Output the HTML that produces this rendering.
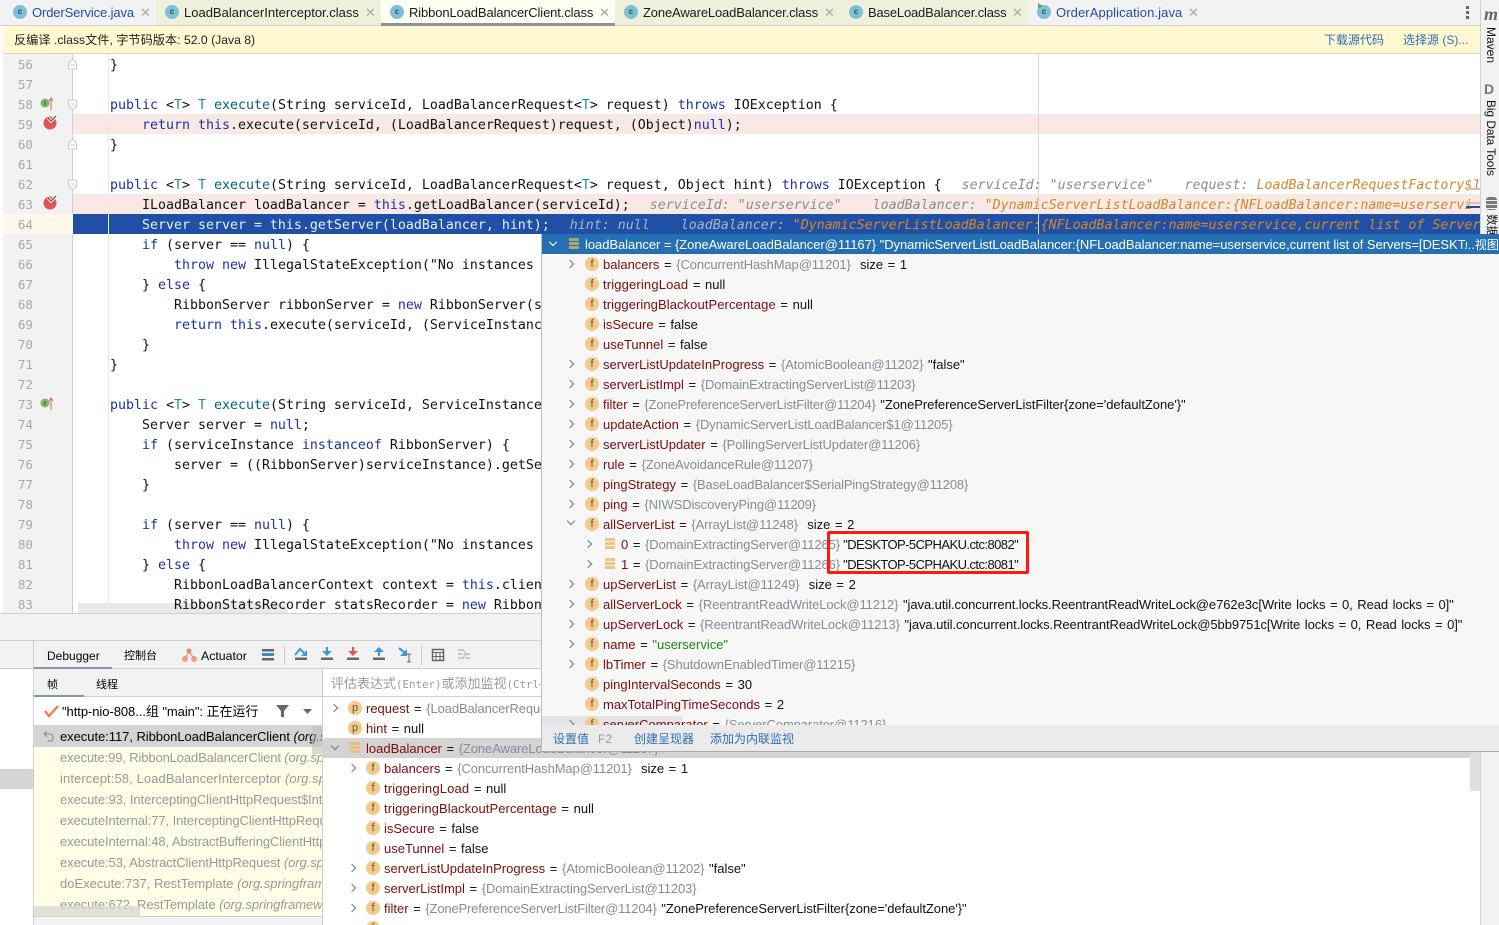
<!DOCTYPE html>
<html><head><meta charset="utf-8">
<style>
html,body{margin:0;padding:0;width:1499px;height:925px;overflow:hidden;background:#fff}
*{box-sizing:border-box}
body{position:relative;font:13px "Liberation Sans","Noto Sans CJK SC",sans-serif;color:#000}
.a{position:absolute}
.t{position:absolute;white-space:nowrap;line-height:20px;height:20px}
.tab{position:absolute;top:0;height:26px;border-bottom:1px solid #d0d0d0}
.tn{position:absolute;top:3px;white-space:nowrap;line-height:20px;color:#1a1a1a;font-size:13px;letter-spacing:-.12px}
.x{position:absolute;top:3px;line-height:20px;color:#aaa;font-size:13px}
.ci{position:absolute;top:5px;width:14px;height:14px;border-radius:50%;background:#7fc0d4;color:#2b4a55;font:bold 8px/14px "Liberation Sans",sans-serif;text-align:center}
.n{position:absolute;left:3px;width:30px;text-align:right;color:#a8a8a8;font:12.6px/22px "DejaVu Sans Mono",monospace;height:20px}
.c{position:absolute;white-space:pre;font:13.29px/24px "DejaVu Sans Mono",monospace;height:20px;color:#111}
.k{color:#1c2fb0}.ty{color:#20909a}.m{color:#00627a}
.h{color:#8c8c8c;font-style:italic}.o{color:#cc8a2b;font-style:italic}
.w{color:#e8eef8}.hs{color:#a7b5cf;font-style:italic}.os{color:#d48a2a;font-style:italic}
.v{position:absolute;white-space:nowrap;line-height:22px;height:20px;font-size:13px;color:#111;word-spacing:1px}
.v b{font-weight:normal;color:#7a0c0c}.v i{font-style:normal;color:#858d93;letter-spacing:-.1px}.v u{text-decoration:none;color:#168a16}
.v s{text-decoration:none;letter-spacing:-.56px;margin-left:-1.5px}
.ic{position:absolute;width:14px;height:14px;border-radius:50%;background:#f4c98a;color:#5a5a3a;font:11px/14px "Liberation Sans",sans-serif;text-align:center}
.ls{position:absolute;width:10px;height:11px;background:repeating-linear-gradient(to bottom,#efc583 0 3px,#f7f7f7 3px 4px)}
.ch{position:absolute;width:6px;height:6px;border-right:1.5px solid #777;border-top:1.5px solid #777;transform:rotate(45deg)}
.cd{position:absolute;width:6px;height:6px;border-right:1.5px solid #777;border-bottom:1.5px solid #777;transform:rotate(45deg)}
.fr{position:absolute;left:60px;white-space:nowrap;line-height:21px;height:21px;font-size:13px;color:#999;letter-spacing:-.08px}
.fr em{color:#999}
</style></head><body>

<!-- tabs -->
<div class="a" style="left:0;top:0;width:1480px;height:26px;background:#f2f2f2;border-bottom:1px solid #d0d0d0"></div>
<div class="tab" style="left:156px;width:225px;background:#eff0dc"></div>
<div class="tab" style="left:381px;width:234px;background:#fffef2;border-bottom:3px solid #8a95a3"></div>
<div class="tab" style="left:615px;width:225px;background:#eff0dc"></div>
<div class="tab" style="left:840px;width:189px;background:#eff0dc"></div>
<div class="ci" style="left:13px">c</div><div class="tn" style="left:32px;color:#1f4fa8">OrderService.java</div><div class="x" style="left:140px">✕</div>
<div class="ci" style="left:165px">c</div><div class="tn" style="left:184px;letter-spacing:0">LoadBalancerInterceptor.class</div><div class="x" style="left:365px">✕</div>
<div class="ci" style="left:390px">c</div><div class="tn" style="left:409px">RibbonLoadBalancerClient.class</div><div class="x" style="left:599px">✕</div>
<div class="ci" style="left:624px">c</div><div class="tn" style="left:643px;letter-spacing:-.15px">ZoneAwareLoadBalancer.class</div><div class="x" style="left:824px">✕</div>
<div class="ci" style="left:849px">c</div><div class="tn" style="left:868px;letter-spacing:-.18px">BaseLoadBalancer.class</div><div class="x" style="left:1012px">✕</div>
<div class="ci" style="left:1037px">c</div><div class="tn" style="left:1056px;color:#1f4fa8;letter-spacing:.1px">OrderApplication.java</div><div class="x" style="left:1188px">✕</div>
<svg class="a" style="left:1036px;top:2px" width="10" height="10"><path d="M2 1l5 3-5 3z" fill="#59a869"/></svg>
<div class="a" style="left:1466px;top:6px;width:3px;height:3px;background:#666;box-shadow:0 5px 0 #666,0 10px 0 #666"></div>

<!-- notification -->
<div class="a" style="left:3px;top:26px;width:1477px;height:28px;background:#fff8d0;border-bottom:1px solid #d6d6d0"></div>
<div class="t" style="left:14px;top:30px;font-size:12.2px;color:#222">反编译 .class文件, 字节码版本: 52.0 (Java 8)</div>
<div class="t" style="left:1324px;top:30px;font-size:12px;color:#2f6fb5">下载源代码</div>
<div class="t" style="left:1403px;top:30px;font-size:12px;color:#2f6fb5">选择源 (S)...</div>

<!-- gutter -->
<div class="a" style="left:3px;top:54px;width:70px;height:559px;background:#f2f2f2;border-right:1px solid #cfcfcf"></div>
<div class="a" style="left:3px;top:214px;width:70px;height:20px;background:#fcf9ea"></div>
<div class="a" style="left:73px;top:114px;width:1407px;height:20px;background:#f8e9e5"></div>
<div class="a" style="left:73px;top:194px;width:1407px;height:20px;background:#f8e9e5"></div>
<div class="a" style="left:73px;top:214px;width:1407px;height:20px;background:#2050a5"></div>
<div class="a" style="left:108px;top:54px;width:1px;height:559px;background:#e8e8e8"></div>
<div class="a" style="left:1038px;top:54px;width:1px;height:180px;background:#d8d8d8"></div>

<div class="n" style="top:54px">56</div><div class="n" style="top:74px">57</div><div class="n" style="top:94px">58</div><div class="n" style="top:114px">59</div><div class="n" style="top:134px">60</div><div class="n" style="top:154px">61</div><div class="n" style="top:174px">62</div><div class="n" style="top:194px">63</div><div class="n" style="top:214px">64</div><div class="n" style="top:234px">65</div><div class="n" style="top:254px">66</div><div class="n" style="top:274px">67</div><div class="n" style="top:294px">68</div><div class="n" style="top:314px">69</div><div class="n" style="top:334px">70</div><div class="n" style="top:354px">71</div><div class="n" style="top:374px">72</div><div class="n" style="top:394px">73</div><div class="n" style="top:414px">74</div><div class="n" style="top:434px">75</div><div class="n" style="top:454px">76</div><div class="n" style="top:474px">77</div><div class="n" style="top:494px">78</div><div class="n" style="top:514px">79</div><div class="n" style="top:534px">80</div><div class="n" style="top:554px">81</div><div class="n" style="top:574px">82</div><div class="n" style="top:594px">83</div>

<svg class="a" style="left:0;top:54px" width="80" height="360">
<g fill="#fff" stroke="#c8c8c8">
<path d="M68.500 15V9l4-4 4 4v6z"/><path d="M70.500 11h4" fill="none"/>
<path d="M68.500 46h8v6l-4 4-4-4z"/><path d="M70.500 50h4" fill="none"/>
<path d="M68.500 95V89l4-4 4 4v6z"/><path d="M70.500 91h4" fill="none"/>
<path d="M68.500 126h8v6l-4 4-4-4z"/><path d="M70.500 130h4" fill="none"/>
</g>
<circle cx="45" cy="49" r="4.500" fill="#7cb868"/><path d="M45 47v4" stroke="#3a5a30"/><path d="M51 56V44M49 47l2-3 2 3" stroke="#e06060" fill="none"/>
<circle cx="50" cy="69" r="6.500" fill="#e0555c"/><path d="M48 64l3 3 5-5" stroke="#fff" stroke-width="3" fill="none"/><path d="M48 64l3 3 5-5" stroke="#555" stroke-width="1.300" fill="none"/>
<circle cx="50" cy="149" r="6.500" fill="#e0555c"/><path d="M48 144l3 3 5-5" stroke="#fff" stroke-width="3" fill="none"/><path d="M48 144l3 3 5-5" stroke="#555" stroke-width="1.300" fill="none"/>
<circle cx="45" cy="349" r="4.500" fill="#7cb868"/><path d="M45 347v4" stroke="#3a5a30"/><path d="M51 356V344M49 347l2-3 2 3" stroke="#e06060" fill="none"/>
</svg>

<!-- code -->
<div class="c" style="left:110px;top:54px">}</div>
<div class="c" style="left:110px;top:94px"><span class="k">public</span> &lt;<span class="ty">T</span>&gt; <span class="ty">T</span> <span class="m">execute</span>(String serviceId, LoadBalancerRequest&lt;<span class="ty">T</span>&gt; request) <span class="k">throws</span> IOException {</div>
<div class="c" style="left:142px;top:114px"><span class="k">return this</span>.execute(serviceId, (LoadBalancerRequest)request, (Object)<span class="k">null</span>);</div>
<div class="c" style="left:110px;top:134px">}</div>
<div class="c" style="left:110px;top:174px"><span class="k">public</span> &lt;<span class="ty">T</span>&gt; <span class="ty">T</span> <span class="m">execute</span>(String serviceId, LoadBalancerRequest&lt;<span class="ty">T</span>&gt; request, Object hint) <span class="k">throws</span> IOException {  <span class="h" style="margin-left:-4px"> serviceId: "userservice"</span><span class="h" style="margin-left:7px">   request: </span><span class="o">LoadBalancerRequestFactory$1</span></div>
<div class="c" style="left:142px;top:194px">ILoadBalancer loadBalancer = <span class="k">this</span>.getLoadBalancer(serviceId);  <span class="h" style="margin-left:-4px"> serviceId: "userservice"</span><span class="h" style="margin-left:7px">   loadBalancer: </span><span class="o">"DynamicServerListLoadBalancer:{NFLoadBalancer:name=userservi</span></div>
<div class="c w" style="left:142px;top:214px">Server server = this.getServer(loadBalancer, hint);  <span class="hs" style="margin-left:-4px"> hint: null</span><span class="hs" style="margin-left:7px">   loadBalancer: </span><span class="os">"DynamicServerListLoadBalancer:{NFLoadBalancer:name=userservice,current list of Server</span></div>
<div class="c" style="left:142px;top:234px"><span class="k">if</span> (server == <span class="k">null</span>) {</div>
<div class="c" style="left:174px;top:254px"><span class="k">throw new</span> IllegalStateException("No instances</div>
<div class="c" style="left:142px;top:274px">} <span class="k">else</span> {</div>
<div class="c" style="left:174px;top:294px">RibbonServer ribbonServer = <span class="k">new</span> RibbonServer(s</div>
<div class="c" style="left:174px;top:314px"><span class="k">return this</span>.execute(serviceId, (ServiceInstanc</div>
<div class="c" style="left:142px;top:334px">}</div>
<div class="c" style="left:110px;top:354px">}</div>
<div class="c" style="left:110px;top:394px"><span class="k">public</span> &lt;<span class="ty">T</span>&gt; <span class="ty">T</span> <span class="m">execute</span>(String serviceId, ServiceInstance</div>
<div class="c" style="left:142px;top:414px">Server server = <span class="k">null</span>;</div>
<div class="c" style="left:142px;top:434px"><span class="k">if</span> (serviceInstance <span class="k">instanceof</span> RibbonServer) {</div>
<div class="c" style="left:174px;top:454px">server = ((RibbonServer)serviceInstance).getSe</div>
<div class="c" style="left:142px;top:474px">}</div>
<div class="c" style="left:142px;top:514px"><span class="k">if</span> (server == <span class="k">null</span>) {</div>
<div class="c" style="left:174px;top:534px"><span class="k">throw new</span> IllegalStateException("No instances</div>
<div class="c" style="left:142px;top:554px">} <span class="k">else</span> {</div>
<div class="c" style="left:174px;top:574px">RibbonLoadBalancerContext context = <span class="k">this</span>.clien</div>
<div class="a" style="left:78px;top:603px;width:210px;height:10px;background:#e8e8e8"></div>
<div class="c" style="left:174px;top:594px">RibbonStatsRecorder statsRecorder = <span class="k">new</span> Ribbon</div>
<div class="a" style="left:1466px;top:188px;width:14px;height:2px;background:#f0b8b0"></div>
<div class="a" style="left:1466px;top:202px;width:14px;height:2px;background:#f0b8b0"></div>

<!-- right stripe -->
<div class="a" style="left:1480px;top:0;width:19px;height:234px;background:#f2f2f2;border-left:1px solid #cfcfcf"></div>
<div class="t" style="left:1484px;top:4px;font:italic bold 18px/20px 'Liberation Serif',serif;color:#666">m</div>
<div class="a" style="left:1490px;top:27px;white-space:nowrap;transform-origin:0 0;transform:rotate(90deg) translateY(-8px);font-size:12px;line-height:14px;color:#111">Maven</div>
<div class="t" style="left:1484px;top:79px;font:bold 14px/20px 'Liberation Sans',sans-serif;color:#777">D</div>
<div class="a" style="left:1490px;top:100px;white-space:nowrap;transform-origin:0 0;transform:rotate(90deg) translateY(-8px);font-size:11.8px;line-height:14px;color:#111">Big Data Tools</div>
<div class="a" style="left:1486px;top:197px;width:11px;height:13px;background:repeating-linear-gradient(to bottom,#777 0 3px,#f2f2f2 3px 4px);border-radius:3px"></div>
<div class="a" style="left:1490px;top:214px;white-space:nowrap;transform-origin:0 0;transform:rotate(90deg) translateY(-8px);font-size:11.5px;line-height:14px;color:#111">数据</div>
<div class="a" style="left:1466px;top:206px;width:14px;height:2px;background:#1f4f9f"></div>

<!-- bottom area -->
<div class="a" style="left:0;top:613px;width:1480px;height:28px;background:#f2f2f2;border-top:1px solid #d0d0d0;border-bottom:1px solid #cfcfcf"></div>
<div class="a" style="left:0;top:641px;width:34px;height:28px;background:#f2f2f2;border-right:1px solid #d0d0d0;border-bottom:1px solid #d0d0d0"></div>
<div class="a" style="left:0;top:669px;width:34px;height:256px;background:#fff;border-right:1px solid #d0d0d0"></div>
<div class="a" style="left:0;top:769px;width:33px;height:20px;background:#d6d6d6"></div>
<div class="a" style="left:34px;top:641px;width:1446px;height:28px;background:#f2f2f2;border-bottom:1px solid #d0d0d0"></div>
<div class="a" style="left:34px;top:667px;width:78px;height:2px;background:#8a95a3"></div>
<div class="t" style="left:47px;top:646px;font-size:12px">Debugger</div>
<div class="t" style="left:124px;top:646px;font-size:11px">控制台</div>
<svg class="a" style="left:181px;top:647px" width="16" height="16"><circle cx="4" cy="12" r="3" fill="#f0a07a"/><circle cx="13" cy="12" r="3" fill="#f0a07a"/><circle cx="8" cy="4" r="2.500" fill="#e88a62"/><path d="M4 11l4-6 5 6" stroke="#e88a62" fill="none"/></svg>
<div class="t" style="left:201px;top:646px;font-size:12.3px">Actuator</div>
<svg class="a" style="left:260px;top:645px" width="160" height="22">
<rect x="2" y="4" width="12" height="2.500" fill="#666"/><rect x="2" y="8" width="12" height="3" fill="#3592c4"/><rect x="2" y="13" width="12" height="2.500" fill="#666"/>
<rect x="35" y="12.500" width="12" height="2.500" fill="#666"/><path d="M35 10l5-6 4 4" stroke="#3a9ad9" stroke-width="2" fill="none"/><path d="M47 5v6h-6z" fill="#3a9ad9"/>
<rect x="61" y="12.500" width="12" height="2.500" fill="#666"/><rect x="66" y="2" width="2" height="5" fill="#3a9ad9"/><path d="M62 6h10l-5 5z" fill="#3a9ad9"/>
<rect x="87" y="12.500" width="12" height="2.500" fill="#666"/><rect x="92" y="2" width="2" height="5" fill="#e0555c"/><path d="M88 6h10l-5 5z" fill="#e0555c"/>
<rect x="113" y="12.500" width="12" height="2.500" fill="#666"/><rect x="118" y="6" width="2" height="5" fill="#3a9ad9"/><path d="M114 7h10l-5-5z" fill="#3a9ad9"/>
<path d="M139 3l6 5" stroke="#3a9ad9" stroke-width="2.200" fill="none"/><path d="M147 4v7h-7z" fill="#3a9ad9"/><path d="M149 9v8M147 9h4M147 17h4" stroke="#666" fill="none"/>
</svg>
<div class="a" style="left:284px;top:646px;width:1px;height:19px;background:#ccc"></div>
<div class="a" style="left:421px;top:646px;width:1px;height:19px;background:#ccc"></div>
<svg class="a" style="left:431px;top:647px" width="40" height="16"><rect x="1.500" y="2.500" width="11" height="11" fill="none" stroke="#666" stroke-width="1.500"/><path d="M1 5.500h12M5 5v8M9 5v8M1 9.500h12" stroke="#666"/><path d="M27 3h5l3 4h4M27 7h5M27 11h5l3-4M35 11h4" stroke="#bbb" stroke-width="1.400" fill="none"/></svg>

<div class="a" style="left:34px;top:669px;width:289px;height:28px;background:#f2f2f2;border-bottom:1px solid #d0d0d0"></div>
<div class="a" style="left:34px;top:695px;width:50px;height:2px;background:#8a95a3"></div>
<div class="t" style="left:47px;top:675px;font-size:11px">帧</div>
<div class="t" style="left:96px;top:675px;font-size:11px">线程</div>
<div class="a" style="left:34px;top:697px;width:289px;height:228px;background:#fff"></div>
<svg class="a" style="left:44px;top:704px" width="16" height="14"><path d="M1 7l4 5 9-10" stroke="#ee7f55" stroke-width="2.400" fill="none"/></svg>
<div class="t" style="left:62px;top:702px;font-size:13px;letter-spacing:-.06px">"http-nio-808...组 "main": 正在运行</div>
<svg class="a" style="left:275px;top:704px" width="40" height="14"><path d="M1 1h13l-5 6v6H6V7z" fill="#666"/><path d="M28 5h9l-4.500 5z" fill="#666"/></svg>
<div class="a" style="left:34px;top:725px;width:289px;height:22px;background:#d4d4d4"></div>
<div class="a" style="left:34px;top:747px;width:289px;height:178px;background:#fffee6"></div>
<svg class="a" style="left:43px;top:729px" width="14" height="14"><path d="M1 5l3-3M1 5l3 3M1 5h7a4 4 0 0 1 0 7H5" stroke="#888" fill="none"/></svg>
<div class="t" style="left:60px;top:726px;width:262px;overflow:hidden;line-height:22px;letter-spacing:-.05px">execute:117, RibbonLoadBalancerClient <i>(org.springframework</i></div>
<div class="a" style="left:312px;top:726px;width:10px;height:28px;background:#bdbdbd;opacity:.55"></div>
<div class="fr" style="top:747px;width:262px;overflow:hidden;letter-spacing:-.13px">execute:99, RibbonLoadBalancerClient <em>(org.springframework</em></div>
<div class="fr" style="top:768px;width:262px;overflow:hidden;letter-spacing:.1px">intercept:58, LoadBalancerInterceptor <em>(org.springframework</em></div>
<div class="fr" style="top:789px;width:262px;overflow:hidden">execute:93, InterceptingClientHttpRequest$InterceptingRequest</div>
<div class="fr" style="top:810px;width:262px;overflow:hidden">executeInternal:77, InterceptingClientHttpRequest</div>
<div class="fr" style="top:831px;width:262px;overflow:hidden">executeInternal:48, AbstractBufferingClientHttpRequest</div>
<div class="fr" style="top:852px;width:262px;overflow:hidden">execute:53, AbstractClientHttpRequest <em>(org.springframework</em></div>
<div class="fr" style="top:873px;width:262px;overflow:hidden;letter-spacing:0">doExecute:737, RestTemplate <em>(org.springframework</em></div>
<div class="fr" style="top:894px;width:262px;overflow:hidden">execute:672, RestTemplate <em>(org.springframework</em></div>
<div class="a" style="left:34px;top:906px;width:106px;height:10px;background:#d8d8d0;opacity:.75"></div>
<div class="a" style="left:34px;top:916px;width:289px;height:9px;background:#f2f2f2;border-top:1px solid #d0d0d0"></div>

<!-- variables -->
<div class="a" style="left:322px;top:669px;width:1158px;height:256px;background:#fff;border-left:1px solid #d0d0d0"></div>
<div class="a" style="left:323px;top:669px;width:1157px;height:28px;background:#fff;border-bottom:1px solid #d0d0d0"></div>
<div class="t" style="left:331px;top:674px;color:#999;font-size:13px;line-height:20px;width:210px;overflow:hidden">评估表达式<span style="font:10.8px 'DejaVu Sans Mono',monospace">(Enter)</span>或添加监视<span style="font:10.8px 'DejaVu Sans Mono',monospace">(Ctrl+Shift+Enter)</span></div>
<div class="a" style="left:323px;top:738px;width:1157px;height:20px;background:#d4d4d4"></div>
<div class="ch" style="left:331px;top:705px"></div>
<div class="ic" style="left:348px;top:701px">p</div><div class="v" style="left:366px;top:698px"><b>request</b> = <i>{LoadBalancerRequestFactory</i></div>
<div class="ic" style="left:348px;top:721px">p</div><div class="v" style="left:366px;top:718px"><b>hint</b> = null</div>
<div class="cd" style="left:332px;top:743px"></div>
<div class="ls" style="left:350px;top:742px;background:repeating-linear-gradient(to bottom,#e9bf7e 0 3px,#d4d4d4 3px 4px)"></div><div class="v" style="left:366px;top:738px"><b>loadBalancer</b> = <i>{ZoneAwareLoadBalancer@11167}</i></div>
<div class="ch" style="left:349px;top:765px"></div><div class="ic" style="left:366px;top:761px">f</div><div class="v" style="left:384px;top:758px"><b>balancers</b> = <i>{ConcurrentHashMap@11201}</i>&nbsp; size = 1</div>
<div class="ic" style="left:366px;top:781px">f</div><div class="v" style="left:384px;top:778px"><b style="letter-spacing:.15px">triggeringLoad</b> = null</div>
<div class="ic" style="left:366px;top:801px">f</div><div class="v" style="left:384px;top:798px"><b style="letter-spacing:.08px">triggeringBlackoutPercentage</b> = null</div>
<div class="ic" style="left:366px;top:821px">f</div><div class="v" style="left:384px;top:818px"><b>isSecure</b> = false</div>
<div class="ic" style="left:366px;top:841px">f</div><div class="v" style="left:384px;top:838px"><b>useTunnel</b> = false</div>
<div class="ch" style="left:349px;top:865px"></div><div class="ic" style="left:366px;top:861px">f</div><div class="v" style="left:384px;top:858px"><b>serverListUpdateInProgress</b> = <i>{AtomicBoolean@11202}</i> "false"</div>
<div class="ch" style="left:349px;top:885px"></div><div class="ic" style="left:366px;top:881px">f</div><div class="v" style="left:384px;top:878px"><b>serverListImpl</b> = <i>{DomainExtractingServerList@11203}</i></div>
<div class="ch" style="left:349px;top:905px"></div><div class="ic" style="left:366px;top:901px">f</div><div class="v" style="left:384px;top:898px"><b>filter</b> = <i style="letter-spacing:-.17px">{ZonePreferenceServerListFilter@11204}</i> <span style="letter-spacing:-.05px">"ZonePreferenceServerListFilter{zone='defaultZone'}"</span></div>
<div class="ic" style="left:366px;top:921px">f</div>
<div class="a" style="left:1470px;top:752px;width:10px;height:39px;background:#e0e0e0"></div>
<div class="a" style="left:1480px;top:234px;width:19px;height:691px;background:#f2f2f2;border-left:1px solid #cfcfcf"></div>

<!-- popup -->
<div class="a" style="left:541px;top:234px;width:958px;height:518px;background:#f7f7f7;border-left:1px solid #bdbdbd;border-bottom:1px solid #a8a8a8"></div>
<div class="a" style="left:542px;top:234px;width:957px;height:20px;background:#2470b3"></div>
<div class="cd" style="left:550px;top:239px;border-color:#fff"></div>
<div class="ls" style="left:569px;top:238px;background:repeating-linear-gradient(to bottom,#b0a46a 0 3px,#2470b3 3px 4px)"></div>
<div class="v" style="left:585px;top:234px;width:882px;overflow:hidden;color:#fff;word-spacing:0;letter-spacing:-.05px">loadBalancer = {ZoneAwareLoadBalancer@11167} "DynamicServerListLoadBalancer:{NFLoadBalancer:name=userservice,current list of Servers=[DESKTOP-5CPHAKU</div>
<div class="v" style="left:1464px;top:234px;color:#fff;word-spacing:0">...<span style="font-size:12px">视图</span></div>

<div class="ch" style="left:567px;top:261px"></div><div class="ic" style="left:585px;top:257px">f</div><div class="v" style="left:603px;top:254px"><b>balancers</b> = <i>{ConcurrentHashMap@11201}</i>&nbsp; size = 1</div>
<div class="ic" style="left:585px;top:277px">f</div><div class="v" style="left:603px;top:274px"><b style="letter-spacing:.15px">triggeringLoad</b> = null</div>
<div class="ic" style="left:585px;top:297px">f</div><div class="v" style="left:603px;top:294px"><b style="letter-spacing:.08px">triggeringBlackoutPercentage</b> = null</div>
<div class="ic" style="left:585px;top:317px">f</div><div class="v" style="left:603px;top:314px"><b>isSecure</b> = false</div>
<div class="ic" style="left:585px;top:337px">f</div><div class="v" style="left:603px;top:334px"><b>useTunnel</b> = false</div>
<div class="ch" style="left:567px;top:361px"></div><div class="ic" style="left:585px;top:357px">f</div><div class="v" style="left:603px;top:354px"><b>serverListUpdateInProgress</b> = <i>{AtomicBoolean@11202}</i> "false"</div>
<div class="ch" style="left:567px;top:381px"></div><div class="ic" style="left:585px;top:377px">f</div><div class="v" style="left:603px;top:374px"><b>serverListImpl</b> = <i>{DomainExtractingServerList@11203}</i></div>
<div class="ch" style="left:567px;top:401px"></div><div class="ic" style="left:585px;top:397px">f</div><div class="v" style="left:603px;top:394px"><b>filter</b> = <i style="letter-spacing:-.17px">{ZonePreferenceServerListFilter@11204}</i> <span style="letter-spacing:-.05px">"ZonePreferenceServerListFilter{zone='defaultZone'}"</span></div>
<div class="ch" style="left:567px;top:421px"></div><div class="ic" style="left:585px;top:417px">f</div><div class="v" style="left:603px;top:414px"><b>updateAction</b> = <i>{DynamicServerListLoadBalancer$1@11205}</i></div>
<div class="ch" style="left:567px;top:441px"></div><div class="ic" style="left:585px;top:437px">f</div><div class="v" style="left:603px;top:434px"><b>serverListUpdater</b> = <i>{PollingServerListUpdater@11206}</i></div>
<div class="ch" style="left:567px;top:461px"></div><div class="ic" style="left:585px;top:457px">f</div><div class="v" style="left:603px;top:454px"><b>rule</b> = <i>{ZoneAvoidanceRule@11207}</i></div>
<div class="ch" style="left:567px;top:481px"></div><div class="ic" style="left:585px;top:477px">f</div><div class="v" style="left:603px;top:474px"><b>pingStrategy</b> = <i style="letter-spacing:-.15px">{BaseLoadBalancer$SerialPingStrategy@11208}</i></div>
<div class="ch" style="left:567px;top:501px"></div><div class="ic" style="left:585px;top:497px">f</div><div class="v" style="left:603px;top:494px"><b>ping</b> = <i>{NIWSDiscoveryPing@11209}</i></div>
<div class="cd" style="left:568px;top:518px"></div><div class="ic" style="left:585px;top:517px">f</div><div class="v" style="left:603px;top:514px"><b>allServerList</b> = <i>{ArrayList@11248}</i>&nbsp; size = 2</div>
<div class="ch" style="left:585px;top:541px"></div><div class="ls" style="left:605px;top:538px"></div><div class="v" style="left:621px;top:534px"><b>0</b> = <i>{DomainExtractingServer@11265}</i> <s>"DESKTOP-5CPHAKU.ctc:8082"</s></div>
<div class="ch" style="left:585px;top:561px"></div><div class="ls" style="left:605px;top:558px"></div><div class="v" style="left:621px;top:554px"><b>1</b> = <i>{DomainExtractingServer@11266}</i> <s>"DESKTOP-5CPHAKU.ctc:8081"</s></div>
<div class="ch" style="left:567px;top:581px"></div><div class="ic" style="left:585px;top:577px">f</div><div class="v" style="left:603px;top:574px"><b>upServerList</b> = <i>{ArrayList@11249}</i>&nbsp; size = 2</div>
<div class="ch" style="left:567px;top:601px"></div><div class="ic" style="left:585px;top:597px">f</div><div class="v" style="left:603px;top:594px"><b>allServerLock</b> = <i>{ReentrantReadWriteLock@11212}</i> <span style="letter-spacing:-.07px">"java.util.concurrent.locks.ReentrantReadWriteLock@e762e3c[Write locks = 0, Read locks = 0]"</span></div>
<div class="ch" style="left:567px;top:621px"></div><div class="ic" style="left:585px;top:617px">f</div><div class="v" style="left:603px;top:614px"><b>upServerLock</b> = <i>{ReentrantReadWriteLock@11213}</i> <span style="letter-spacing:-.07px">"java.util.concurrent.locks.ReentrantReadWriteLock@5bb9751c[Write locks = 0, Read locks = 0]"</span></div>
<div class="ch" style="left:567px;top:641px"></div><div class="ic" style="left:585px;top:637px">f</div><div class="v" style="left:603px;top:634px"><b>name</b> = <u>"userservice"</u></div>
<div class="ch" style="left:567px;top:661px"></div><div class="ic" style="left:585px;top:657px">f</div><div class="v" style="left:603px;top:654px"><b>lbTimer</b> = <i>{ShutdownEnabledTimer@11215}</i></div>
<div class="ic" style="left:585px;top:677px">f</div><div class="v" style="left:603px;top:674px"><b>pingIntervalSeconds</b> = 30</div>
<div class="ic" style="left:585px;top:697px">f</div><div class="v" style="left:603px;top:694px"><b>maxTotalPingTimeSeconds</b> = 2</div>
<div class="a" style="left:542px;top:716px;width:141px;height:9px;background:#e4e4e4"></div>
<div class="ch" style="left:567px;top:721px"></div><div class="ic" style="left:585px;top:717px">f</div><div class="v" style="left:603px;top:714px"><b>serverComparator</b> = <i>{ServerComparator@11216}</i></div>
<div class="a" style="left:542px;top:725px;width:957px;height:26px;background:#ebebeb"></div>
<div class="t" style="left:553px;top:729px;font-size:12px;color:#2f6fb5">设置值</div>
<div class="t" style="left:598px;top:729px;font-size:12px;color:#999">F2</div>
<div class="t" style="left:634px;top:729px;font-size:12px;color:#2f6fb5">创建呈现器</div>
<div class="t" style="left:710px;top:729px;font-size:12px;color:#2f6fb5">添加为内联监视</div>

<!-- red box -->
<div class="a" style="left:827px;top:531px;width:202px;height:43px;border:3px solid #ff1a10;border-radius:2px"></div>
</body></html>
